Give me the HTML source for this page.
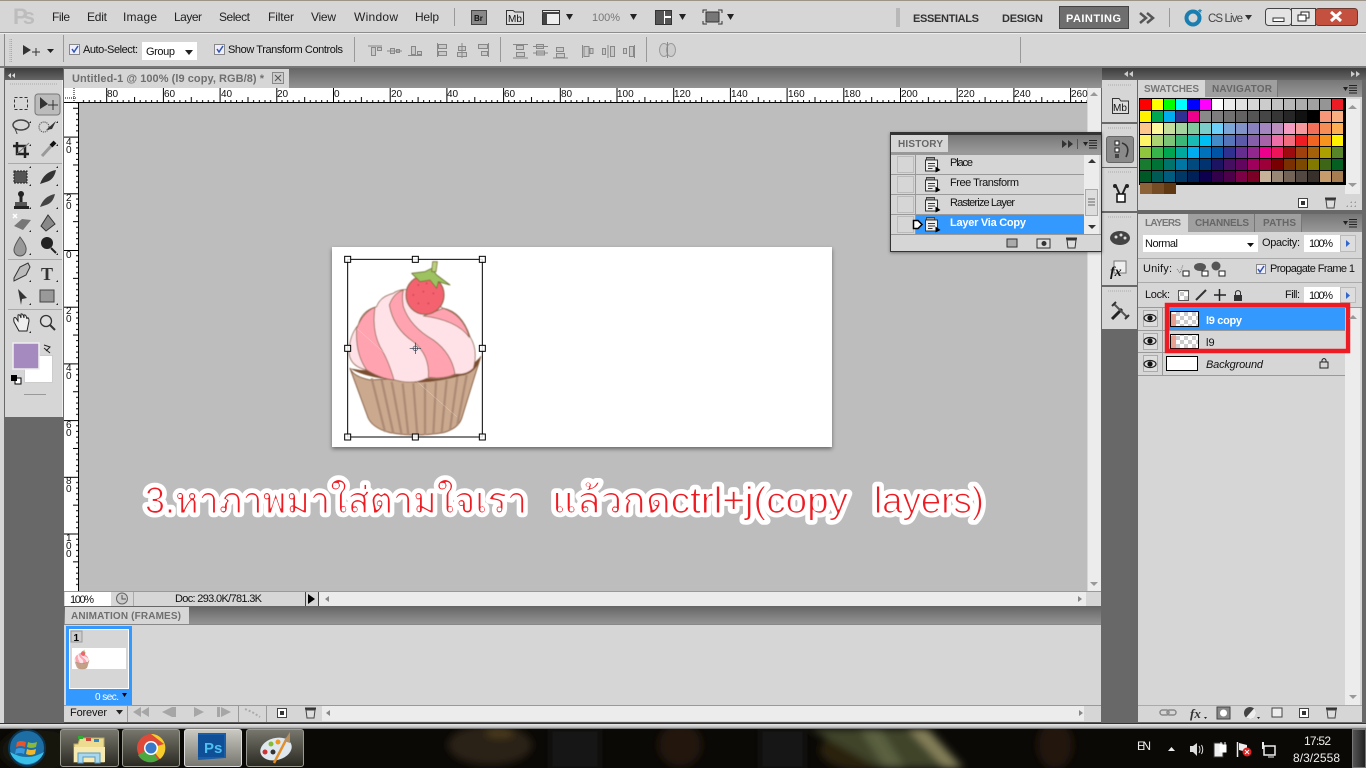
<!DOCTYPE html>
<html><head><meta charset="utf-8"><title>Photoshop</title>
<style>
html,body{margin:0;padding:0;width:1366px;height:768px;overflow:hidden;background:#686868}
.b{position:absolute;box-sizing:border-box}
svg{position:absolute;left:0;top:0}
text{font-family:"Liberation Sans","Noto Sans CJK JP",sans-serif;font-size:11px;fill:#111}
.m{font-size:12px;fill:#222}
.t{font-size:11px;font-weight:bold;fill:#6f6f6f}
.sw{position:absolute;left:1139px;top:98px;width:205px;display:grid;grid-template-columns:repeat(17,11px);grid-auto-rows:11px;gap:1px;padding:1px;background:#000;height:85px}
.sw2{position:absolute;left:1140px;top:183px;display:grid;grid-template-columns:repeat(3,12px);grid-auto-rows:11px}
.sw i,.sw2 i{display:block}
.cap{font-size:37px;font-family:"Liberation Sans","Noto Sans CJK JP","WenQuanYi Zen Hei",sans-serif}
.halo{fill:#fff;stroke:#fff;stroke-width:8.5px;stroke-linejoin:round}
.ink{fill:#ed1c24}
</style></head><body>
<!-- frame -->
<div class="b" style="left:0;top:0;width:1366px;height:1px;background:#9c9486"></div>
<div class="b" style="left:0;top:1px;width:1366px;height:31px;background:#d6d6d6"></div>
<div class="b" style="left:0;top:32px;width:1366px;height:2px;background:linear-gradient(#8d8d8d 50%,#eee 50%)"></div>
<div class="b" style="left:4px;top:34px;width:1362px;height:32px;background:#d6d6d6;border-left:1px solid #888"></div>
<div class="b" style="left:0;top:34px;width:4px;height:691px;background:#d6d6d6"></div>
<div class="b" style="left:0;top:66px;width:1366px;height:2px;background:#777"></div>
<div class="b" style="left:0;top:68px;width:1366px;height:657px;background:#686868"></div>
<div class="b" style="left:0;top:68px;width:4px;height:657px;background:#d6d6d6"></div>
<!-- tool panel -->
<div class="b" style="left:5px;top:68px;width:58px;height:12px;background:linear-gradient(#3d3d3d,#666)"></div>
<div class="b" style="left:5px;top:80px;width:58px;height:337px;background:#d6d6d6;border-right:1px solid #eee"></div>
<!-- doc -->
<div class="b" style="left:64px;top:68px;width:1038px;height:20px;background:linear-gradient(#666,#939393)"></div>
<div class="b" style="left:64px;top:69px;width:225px;height:19px;background:#d6d6d6"></div>
<div class="b" style="left:64px;top:88px;width:1023px;height:15px;background:#fff;border-bottom:1px solid #000"></div>
<div class="b" style="left:64px;top:103px;width:15px;height:488px;background:#fff;border-right:1px solid #000"></div>
<div class="b" style="left:79px;top:103px;width:1008px;height:488px;background:#bdbdbd"></div>
<div class="b" style="left:1087px;top:88px;width:14px;height:503px;background:#ececec;border-left:1px solid #d6d6d6"></div>
<div class="b" style="left:332px;top:247px;width:500px;height:200px;background:#fff;box-shadow:0 2px 4px rgba(0,0,0,.45)"></div>
<!-- status -->
<div class="b" style="left:64px;top:591px;width:1037px;height:15px;background:#d6d6d6;border-top:1px solid #999"></div>
<div class="b" style="left:65px;top:592px;width:46px;height:14px;background:#fff"></div>
<div class="b" style="left:318px;top:592px;width:768px;height:14px;background:#ececec"></div>
<div class="b" style="left:1086px;top:592px;width:15px;height:14px;background:#d6d6d6"></div>
<!-- animation -->
<div class="b" style="left:64px;top:606px;width:1037px;height:18px;background:linear-gradient(#656565,#949494)"></div>
<div class="b" style="left:65px;top:607px;width:124px;height:17px;background:#d6d6d6"></div>
<div class="b" style="left:64px;top:624px;width:1037px;height:98px;background:#d6d6d6;border-top:1px solid #888"></div>
<div class="b" style="left:66px;top:626px;width:66px;height:79px;background:#3399ff"></div>
<div class="b" style="left:69px;top:629px;width:60px;height:60px;background:#d6d6d6;border:1px solid #fff;outline:0"></div>
<div class="b" style="left:72px;top:648px;width:54px;height:21px;background:#fff"></div>
<div class="b" style="left:64px;top:705px;width:1037px;height:1px;background:#999"></div>
<div class="b" style="left:322px;top:706px;width:762px;height:15px;background:#ececec"></div>
<div class="b" style="left:64px;top:722px;width:1037px;height:1px;background:#555"></div>
<!-- right dock -->
<div class="b" style="left:1102px;top:68px;width:264px;height:12px;background:linear-gradient(#3d3d3d,#666)"></div>
<div class="b" style="left:1102px;top:80px;width:35px;height:42px;background:#d6d6d6"></div>
<div class="b" style="left:1102px;top:124px;width:35px;height:43px;background:#d6d6d6"></div>
<div class="b" style="left:1102px;top:168px;width:35px;height:43px;background:#d6d6d6"></div>
<div class="b" style="left:1102px;top:213px;width:35px;height:72px;background:#d6d6d6"></div>
<div class="b" style="left:1102px;top:287px;width:35px;height:42px;background:#d6d6d6"></div>
<div class="b" style="left:1106px;top:136px;width:28px;height:27px;background:#8a8a8a;border:1px solid #666;border-radius:3px"></div>
<!-- swatches panel -->
<div class="b" style="left:1138px;top:80px;width:224px;height:130px;background:#d6d6d6"></div>
<div class="b" style="left:1205px;top:80px;width:157px;height:17px;background:linear-gradient(#777,#999)"></div>
<div class="b" style="left:1205px;top:80px;width:73px;height:17px;background:#9f9f9f;border-right:1px solid #777"></div>
<div class="b" style="left:1345px;top:99px;width:15px;height:95px;background:#ececec"></div>
<div class="sw">
<i style="background:#f00"></i><i style="background:#ff0"></i><i style="background:#0f0"></i><i style="background:#0ff"></i><i style="background:#00f"></i><i style="background:#f0f"></i><i style="background:#fff"></i><i style="background:#ebebeb"></i><i style="background:#e1e1e1"></i><i style="background:#d7d7d7"></i><i style="background:#ccc"></i><i style="background:#c2c2c2"></i><i style="background:#b7b7b7"></i><i style="background:#acacac"></i><i style="background:#a1a1a1"></i><i style="background:#959595"></i><i style="background:#ed1c24"></i>
<i style="background:#fff200"></i><i style="background:#00a651"></i><i style="background:#00aeef"></i><i style="background:#2e3192"></i><i style="background:#ec008c"></i><i style="background:#898989"></i><i style="background:#7d7d7d"></i><i style="background:#707070"></i><i style="background:#626262"></i><i style="background:#555"></i><i style="background:#464646"></i><i style="background:#363636"></i><i style="background:#262626"></i><i style="background:#111"></i><i style="background:#000"></i><i style="background:#f7977a"></i><i style="background:#fbad82"></i>
<i style="background:#fdc68c"></i><i style="background:#fff799"></i><i style="background:#c6df9c"></i><i style="background:#a4d49d"></i><i style="background:#81ca9d"></i><i style="background:#7bcdc9"></i><i style="background:#6ccff7"></i><i style="background:#7ca6d8"></i><i style="background:#8293ca"></i><i style="background:#8881be"></i><i style="background:#a286bd"></i><i style="background:#bc8dbf"></i><i style="background:#f49bc1"></i><i style="background:#f5999d"></i><i style="background:#f26f5a"></i><i style="background:#f68e55"></i><i style="background:#fdae53"></i>
<i style="background:#fff467"></i><i style="background:#acd372"></i><i style="background:#7cc576"></i><i style="background:#3bb878"></i><i style="background:#1abbb4"></i><i style="background:#00bff3"></i><i style="background:#438cca"></i><i style="background:#5574b9"></i><i style="background:#5c5aa8"></i><i style="background:#855fa8"></i><i style="background:#a763a8"></i><i style="background:#ee6fa8"></i><i style="background:#f16d7e"></i><i style="background:#ee1d24"></i><i style="background:#f16522"></i><i style="background:#f7941d"></i><i style="background:#fff100"></i>
<i style="background:#8fc63d"></i><i style="background:#37b44a"></i><i style="background:#00a650"></i><i style="background:#00a99e"></i><i style="background:#00aeef"></i><i style="background:#0072bc"></i><i style="background:#0054a5"></i><i style="background:#2f3090"></i><i style="background:#662d91"></i><i style="background:#92278f"></i><i style="background:#ec008c"></i><i style="background:#ed145a"></i><i style="background:#9e0b0f"></i><i style="background:#a0410d"></i><i style="background:#a36209"></i><i style="background:#aba000"></i><i style="background:#588528"></i>
<i style="background:#197b30"></i><i style="background:#007236"></i><i style="background:#00736a"></i><i style="background:#0076a4"></i><i style="background:#004a80"></i><i style="background:#003370"></i><i style="background:#1d1363"></i><i style="background:#450e61"></i><i style="background:#62055f"></i><i style="background:#9e005c"></i><i style="background:#9d0039"></i><i style="background:#790000"></i><i style="background:#7a3000"></i><i style="background:#7c4900"></i><i style="background:#827a00"></i><i style="background:#3e6617"></i><i style="background:#045f20"></i>
<i style="background:#005826"></i><i style="background:#005952"></i><i style="background:#005b7f"></i><i style="background:#003764"></i><i style="background:#002157"></i><i style="background:#0d004c"></i><i style="background:#32004b"></i><i style="background:#4b0049"></i><i style="background:#7b0046"></i><i style="background:#7a0026"></i><i style="background:#c7b299"></i><i style="background:#998675"></i><i style="background:#736357"></i><i style="background:#534741"></i><i style="background:#37302a"></i><i style="background:#c69c6d"></i><i style="background:#a77c50"></i>
</div>
<div class="sw2"><i style="background:#8c6239"></i><i style="background:#754c24"></i><i style="background:#603913"></i></div>
<!-- layers panel -->
<div class="b" style="left:1138px;top:214px;width:224px;height:508px;background:#d6d6d6"></div>
<div class="b" style="left:1188px;top:214px;width:174px;height:18px;background:linear-gradient(#777,#999)"></div>
<div class="b" style="left:1188px;top:214px;width:67px;height:18px;background:#9f9f9f;border-right:1px solid #777"></div>
<div class="b" style="left:1255px;top:214px;width:47px;height:18px;background:#9f9f9f;border-right:1px solid #777"></div>
<div class="b" style="left:1143px;top:235px;width:115px;height:17px;background:#fff"></div>
<div class="b" style="left:1304px;top:235px;width:36px;height:17px;background:#fff"></div>
<div class="b" style="left:1340px;top:235px;width:16px;height:17px;background:#ddd;border:1px solid #bbb"></div>
<div class="b" style="left:1138px;top:258px;width:224px;height:1px;background:#aaa"></div>
<div class="b" style="left:1138px;top:282px;width:224px;height:1px;background:#aaa"></div>
<div class="b" style="left:1304px;top:287px;width:36px;height:16px;background:#fff"></div>
<div class="b" style="left:1340px;top:287px;width:16px;height:16px;background:#ddd;border:1px solid #bbb"></div>
<div class="b" style="left:1138px;top:307px;width:224px;height:1px;background:#999"></div>
<div class="b" style="left:1165px;top:308px;width:180px;height:22px;background:#3399ff"></div>
<div class="b" style="left:1138px;top:330px;width:207px;height:1px;background:#999"></div>
<div class="b" style="left:1138px;top:352px;width:207px;height:1px;background:#999"></div>
<div class="b" style="left:1138px;top:375px;width:207px;height:1px;background:#999"></div>
<div class="b" style="left:1162px;top:308px;width:1px;height:68px;background:#999"></div>
<div class="b" style="left:1345px;top:308px;width:15px;height:397px;background:#ececec"></div>
<div class="b" style="left:1138px;top:705px;width:224px;height:1px;background:#aaa"></div>
<!-- history floating -->
<div class="b" style="left:890px;top:132px;width:212px;height:120px;background:#d6d6d6;border:1px solid #333;border-top:3px solid #333;box-shadow:0 1px 3px rgba(0,0,0,.4)"></div>
<div class="b" style="left:948px;top:135px;width:153px;height:17px;background:linear-gradient(#777,#999)"></div>
<div class="b" style="left:891px;top:152px;width:210px;height:3px;background:#999"></div>
<div class="b" style="left:1084px;top:155px;width:15px;height:80px;background:#ececec"></div>
<div class="b" style="left:916px;top:215px;width:168px;height:19px;background:#3399ff"></div>
<div class="b" style="left:1085px;top:189px;width:13px;height:27px;background:#ddd;border:1px solid #aaa"></div>
<!-- taskbar -->
<div class="b" style="left:0;top:723px;width:1366px;height:6px;background:linear-gradient(#333 0,#333 17%,#e8e8e8 17%,#bbb 75%,#555 100%)"></div>
<div class="b" style="left:0;top:729px;width:1366px;height:39px;background:#0b0906;overflow:hidden">
<svg width="1366" height="39" viewBox="0 729 1366 39"><defs><filter id="bl" x="-20%" y="-50%" width="140%" height="200%"><feGaussianBlur stdDeviation="4"/></filter></defs>
<g filter="url(#bl)"><ellipse cx="490" cy="745" rx="42" ry="20" fill="#2a2212"/><ellipse cx="500" cy="733" rx="14" ry="5" fill="#4a3a1e"/><rect x="550" y="729" width="50" height="40" fill="#191814"/><ellipse cx="680" cy="745" rx="22" ry="22" fill="#21190c"/><rect x="760" y="729" width="45" height="40" fill="#161612"/><ellipse cx="860" cy="750" rx="40" ry="20" fill="#2c2110"/><path d="M810 729L930 729L965 768L880 768Z" fill="#41442c"/><path d="M908 729L925 729L960 768L945 768Z" fill="#85805a"/><path d="M860 729L880 729L905 768L885 768Z" fill="#5a6040"/><ellipse cx="1055" cy="745" rx="18" ry="24" fill="#20140a"/><ellipse cx="40" cy="750" rx="40" ry="22" fill="#18160c"/></g></svg>
</div>
<div class="b" style="left:60px;top:729px;width:59px;height:38px;border:1px solid #9a9a90;border-radius:3px;background:linear-gradient(#77766c,#2b2a22)"></div>
<div class="b" style="left:122px;top:729px;width:58px;height:38px;border:1px solid #9a9a90;border-radius:3px;background:linear-gradient(#77766c,#2b2a22)"></div>
<div class="b" style="left:184px;top:729px;width:58px;height:38px;border:1px solid #ddd;border-radius:3px;background:linear-gradient(#c9c9c2,#77776f)"></div>
<div class="b" style="left:246px;top:729px;width:58px;height:38px;border:1px solid #9a9a90;border-radius:3px;background:linear-gradient(#77766c,#2b2a22)"></div>
<div class="b" style="left:1352px;top:729px;width:14px;height:39px;background:linear-gradient(90deg,#555,#222);border:1px solid #777"></div>

<svg width="1366" height="768" viewBox="0 0 1366 768">
<defs>
<filter id="er" x="-2%" y="-10%" width="104%" height="120%"><feMorphology operator="erode" radius="0.7"/></filter>
<filter id="sf"><feGaussianBlur stdDeviation="1.200"/></filter>
<pattern id="rh" x="333" y="88" width="56.7" height="15" patternUnits="userSpaceOnUse"><path d="M.5 0V15M5.7 12V15M11.3 12V15M17 12V15M22.7 12V15M28.4 9V15M34 12V15M39.7 12V15M45.4 12V15M51 12V15" stroke="#000" fill="none"/></pattern>
<pattern id="rv" x="64" y="250" width="15" height="56.7" patternUnits="userSpaceOnUse"><path d="M0 .5H15M12 5.7H15M12 11.3H15M12 17H15M12 22.7H15M9 28.4H15M12 34H15M12 39.7H15M12 45.4H15M12 51H15" stroke="#000" fill="none"/></pattern>
<pattern id="ck" width="8" height="8" patternUnits="userSpaceOnUse"><rect width="8" height="8" fill="#fff"/><rect width="4" height="4" fill="#ccc"/><rect x="4" y="4" width="4" height="4" fill="#ccc"/></pattern>
<g id="hi"><rect x="1" y="0" width="8" height="3" fill="#999" stroke="#444"/><rect x="0" y="2.500" width="12" height="11" fill="#eee" stroke="#333"/><path d="M2.500 6H9.500M2.500 8.500H9.500M2.500 11H7" stroke="#333"/><path d="M10 9L15 12.500L10 15Z" fill="#000"/></g>
<g id="eye"><ellipse cx="0" cy="0" rx="6" ry="3.500" fill="#ddd" stroke="#222" stroke-width="1.200"/><circle r="2.600" fill="#111"/></g>
<g id="cup" stroke-linejoin="round">
<path d="M60 385L115 535Q130 565 180 578Q255 592 340 578Q385 565 395 535L452 350Q440 395 400 405L120 420Q70 410 60 385Z" fill="#cba98f" stroke="#8a6244" stroke-width="3"/>
<path d="M125 415L165 575M155 420L190 580M185 425L215 585M218 430L235 585M250 430L262 587M285 430L285 585M318 425L310 582M350 420L335 578M382 410L360 570M410 405L382 555" stroke="#ac8a74" stroke-width="7" fill="none"/>
<path d="M60 385Q100 410 190 420Q280 440 400 405Q440 395 452 350L400 400L90 390Z" fill="#7a4d2d"/>
<path d="M58 345Q55 290 85 255Q95 212 140 200Q150 170 190 160Q210 145 240 150L340 205Q395 215 420 290Q445 330 430 385Q410 405 380 402Q350 420 290 415Q250 435 195 420Q160 420 110 390Q65 380 58 345Z" fill="#ffe2e7" stroke="#8f6448" stroke-width="2.500"/>
<path d="M80 265Q75 340 110 390Q150 415 192 420Q175 360 150 320Q125 270 135 202Q100 215 80 265Z" fill="#ffa3b1" stroke="#8f6448" stroke-width="2.500"/>
<path d="M178 195Q190 265 250 305Q300 345 295 412Q345 418 375 402Q365 340 310 300Q240 260 220 200Q215 170 220 150Q190 160 178 195Z" fill="#ffa3b1" stroke="#8f6448" stroke-width="2.500"/>
<path d="M280 228Q380 240 418 292Q400 225 340 205Z" fill="#ffa3b1" stroke="#8f6448" stroke-width="2.500"/>
<ellipse cx="285" cy="165" rx="57" ry="58" fill="#f4626f" stroke="#8f6448" stroke-width="3.500"/>
<path d="M245 100L285 95L305 85L320 105L360 135L325 125L320 145L300 120L270 125Z" fill="#9cc35f" stroke="#6a6a2a" stroke-width="2.500"/>
<path d="M308 65L322 65L318 95L305 95Z" fill="#b9d27a" stroke="#7a6a3a" stroke-width="2.500"/>
<g fill="#d04a58"><circle cx="265" cy="135" r="3"/><circle cx="290" cy="130" r="3"/><circle cx="250" cy="165" r="3"/><circle cx="280" cy="155" r="3"/><circle cx="310" cy="160" r="3"/><circle cx="265" cy="190" r="3"/><circle cx="295" cy="190" r="3"/></g>
</g>
</defs>

<!-- menu -->
<text x="13" y="24" style="font-size:22px;font-weight:bold;fill:#bdbdbd" textLength="22">Ps</text>
<text class="m" x="52" y="21" textLength="18">File</text><text class="m" x="87" y="21" textLength="20">Edit</text><text class="m" x="123" y="21" textLength="34">Image</text><text class="m" x="174" y="21" textLength="28">Layer</text><text class="m" x="219" y="21" textLength="31">Select</text><text class="m" x="268" y="21" textLength="26">Filter</text><text class="m" x="311" y="21" textLength="25">View</text><text class="m" x="354" y="21" textLength="44">Window</text><text class="m" x="415" y="21" textLength="24">Help</text>
<path d="M454.500 8V26" stroke="#999"/>
<rect x="471.500" y="10.500" width="15" height="14" fill="#888" stroke="#444"/><text x="474" y="21" style="font-size:8px;font-weight:bold">Br</text>
<path d="M506.500 10.500H513L515 12H523.500V24.500H506.500Z" fill="#ddd" stroke="#333"/><text x="508" y="22" style="font-size:10px">Mb</text>
<rect x="542.500" y="10.500" width="17" height="14" fill="#eee" stroke="#333"/><path d="M542 12H560V14H542ZM543 14H547V24H543Z" fill="#444"/>
<path d="M566 14H573L569.500 20Z" fill="#222"/>
<text x="592" y="21" textLength="28" style="font-size:11px;fill:#777">100%</text>
<path d="M630 14H637L633.500 20Z" fill="#222"/>
<rect x="655.500" y="10.500" width="16" height="14" fill="#fff" stroke="#333"/><path d="M656 11H664V24H656ZM665 11H671V16H665ZM665 18H671V24H665Z" fill="#555"/>
<path d="M679 14H686L682.500 20Z" fill="#222"/>
<rect x="706" y="12" width="13" height="10" fill="#777" stroke="#333"/><path d="M703 13V10H707M718 10H722V13M722 21V24H718M707 24H703V21" fill="none" stroke="#333"/>
<path d="M727 14H734L730.500 20Z" fill="#222"/>
<path d="M897 8V27M899 8V27" stroke="#999"/>
<text x="913" y="22" textLength="66" style="font-size:11px;font-weight:bold;fill:#333">ESSENTIALS</text>
<text x="1002" y="22" textLength="41" style="font-size:11px;font-weight:bold;fill:#333">DESIGN</text>
<rect x="1059.500" y="6.500" width="69" height="22" fill="#6e6e6e" stroke="#444"/>
<text x="1066" y="22" textLength="55" style="font-size:11px;font-weight:bold;fill:#fff">PAINTING</text>
<path d="M1140 13L1146 18L1140 23M1147 13L1153 18L1147 23" fill="none" stroke="#555" stroke-width="2.500"/>
<path d="M1169.500 8V27" stroke="#999"/>
<circle cx="1193" cy="18" r="6.500" fill="none" stroke="#1a7fb0" stroke-width="4"/><text x="1198" y="16" style="font-size:10px;font-weight:bold;fill:#1a7fb0">*</text>
<text x="1208" y="22" textLength="35" style="font-size:11.500px;fill:#444">CS Live</text><path d="M1245 15H1252L1248.500 20Z" fill="#333"/>
<rect x="1265.500" y="8.500" width="26" height="17" rx="3" fill="#e4e4e4" stroke="#444"/><rect x="1273" y="18" width="11" height="3.500" fill="#fff" stroke="#333"/>
<rect x="1291.500" y="8.500" width="24" height="17" fill="#e4e4e4" stroke="#444"/><rect x="1301" y="12" width="8" height="6" fill="#fff" stroke="#222"/><rect x="1298" y="15" width="8" height="6" fill="#fff" stroke="#222"/>
<rect x="1315.500" y="8.500" width="42" height="17" rx="3" fill="#c4503f" stroke="#6a3a30"/><path d="M1331 12L1341 21M1341 12L1331 21" stroke="#fff" stroke-width="3"/>

<!-- options -->
<path d="M10 39V62M11.500 39V62" stroke="#aaa" stroke-dasharray="1 1"/>
<path d="M23 45L31 50L23 55Z" fill="#333"/><path d="M36 48V56M32 52H40" stroke="#333"/>
<path d="M47 49H54L50.500 53Z" fill="#222"/>
<g stroke="#999"><path d="M63.500 35V62M354.500 37V62M500.500 37V62M646.500 37V62M1020.500 37V63"/></g>
<rect x="69.500" y="44.500" width="10" height="10" fill="#eef" stroke="#888"/><path d="M72 49L74 52L78 46" stroke="#35a" stroke-width="1.500" fill="none"/>
<text x="83" y="53" textLength="55">Auto-Select:</text>
<rect x="142" y="42" width="55" height="18" fill="#fff"/><text x="146" y="55" textLength="29">Group</text><path d="M185 50H193L189 55Z" fill="#222"/>
<rect x="214.500" y="44.500" width="10" height="10" fill="#eef" stroke="#888"/><path d="M217 49L219 52L223 46" stroke="#35a" stroke-width="1.500" fill="none"/>
<text x="228" y="53" textLength="115">Show Transform Controls</text>
<g fill="#c8c8c8" stroke="#888">
<path d="M368 46H382M371.500 47.500h4v8h-4zM377.500 47.500h4v3h-4z"/><path d="M387 51H402M390.500 48.500h4v5h-4zM396.500 49.500h3v3h-3z"/><path d="M408 55.500H422M411.500 46.500h4v8h-4zM417.500 51.500h4v3h-4z"/>
<path d="M437.500 43V57M438.500 44.500h8v4h-8zM438.500 51.500h8v4h-8z"/><path d="M462 43V58M458.500 46.500h7v4h-7zM457.500 52.500h9v4h-9z"/><path d="M488.500 43V57M478.500 44.500h9v4h-9zM481.500 51.500h6v4h-6z"/>
<path d="M513 44.500H528M516.500 45.500h7v4h-7zM516.500 52.500h8v4h-8zM513 58H528"/><path d="M533 46.500H548M533 53H548M536.500 44.500h7v4h-7zM536.500 51h8v4h-8z"/><path d="M553 58H568M556.500 47.500h7v4h-7zM556.500 53.500h8v4h-8z"/>
<path d="M582.500 45V58M584 46.500h5v10h-5zM590 48.500h3v5h-3z"/><path d="M608 45V58M602.500 48.500h3v6h-3zM610.500 46.500h4v10h-4z"/><path d="M634.500 45V58M623.500 48.500h3v5h-3zM629.500 46.500h4v10h-4z"/>
</g>
<ellipse cx="664" cy="50" rx="4.500" ry="6.500" fill="#ccc" stroke="#999"/><ellipse cx="671" cy="50" rx="4.500" ry="6.500" fill="#ccc" stroke="#999"/><path d="M667.500 42V58" stroke="#888"/>

<!-- collapse arrows -->
<path d="M11 73L8 75.500L11 78ZM15 73L12 75.500L15 78Z" fill="#ddd"/>
<path d="M1128 71L1124 74L1128 77ZM1133 71L1129 74L1133 77Z" fill="#ccc"/>
<path d="M1351 71L1355 74L1351 77ZM1356 71L1360 74L1356 77Z" fill="#ccc"/>
<!-- title -->
<text class="t" x="72" y="82" textLength="192">Untitled-1 @ 100% (l9 copy, RGB/8) *</text>
<rect x="272.500" y="72.500" width="11" height="11" fill="#ccc" stroke="#888"/><path d="M275 75L281 81M281 75L275 81" stroke="#555"/>
<!-- rulers -->
<rect x="79" y="88" width="1008" height="15" fill="url(#rh)"/>
<rect x="64" y="103" width="15" height="487" fill="url(#rv)"/>
<g><text x="107" y="97" style="font-size:10px">80</text><text x="164" y="97" style="font-size:10px">60</text><text x="221" y="97" style="font-size:10px">40</text><text x="277" y="97" style="font-size:10px">20</text><text x="334" y="97" style="font-size:10px">0</text><text x="391" y="97" style="font-size:10px">20</text><text x="447" y="97" style="font-size:10px">40</text><text x="504" y="97" style="font-size:10px">60</text><text x="561" y="97" style="font-size:10px">80</text><text x="617" y="97" style="font-size:10px">100</text><text x="674" y="97" style="font-size:10px">120</text><text x="731" y="97" style="font-size:10px">140</text><text x="788" y="97" style="font-size:10px">160</text><text x="844" y="97" style="font-size:10px">180</text><text x="901" y="97" style="font-size:10px">200</text><text x="958" y="97" style="font-size:10px">220</text><text x="1014" y="97" style="font-size:10px">240</text><text x="1071" y="97" style="font-size:10px">260</text></g>
<g><text x="66" y="145" style="font-size:10px">4</text><text x="66" y="153" style="font-size:10px">0</text><text x="66" y="201" style="font-size:10px">2</text><text x="66" y="209" style="font-size:10px">0</text><text x="66" y="258" style="font-size:10px">0</text><text x="66" y="314" style="font-size:10px">2</text><text x="66" y="322" style="font-size:10px">0</text><text x="66" y="371" style="font-size:10px">4</text><text x="66" y="379" style="font-size:10px">0</text><text x="66" y="428" style="font-size:10px">6</text><text x="66" y="436" style="font-size:10px">0</text><text x="66" y="484" style="font-size:10px">8</text><text x="66" y="492" style="font-size:10px">0</text><text x="66" y="541" style="font-size:10px">1</text><text x="66" y="549" style="font-size:10px">0</text><text x="66" y="557" style="font-size:10px">0</text></g>
<path d="M1090 96L1094 92L1098 96ZM1090 582L1094 586L1098 582Z" fill="#999"/>
<path d="M65 98H77M74 88V103" stroke="#000" stroke-dasharray="1 1"/>

<!-- toolbar -->
<path d="M10 84H58" stroke="#aaa" stroke-dasharray="1 1"/>
<rect x="35" y="94" width="25" height="21" rx="3" fill="#bbb" stroke="#777"/>
<rect x="14.500" y="97.500" width="13" height="12" fill="none" stroke="#333" stroke-dasharray="3 2"/>
<path d="M40 97L48 104L40 109Z" fill="#333"/><path d="M53 100V110M48 105H58" stroke="#333"/>
<ellipse cx="21" cy="125" rx="8" ry="5" fill="none" stroke="#444" stroke-width="1.500"/><path d="M15 129Q17 133 17 134" stroke="#444" fill="none"/>
<circle cx="44" cy="127" r="5" fill="none" stroke="#333" stroke-dasharray="1 1"/><path d="M46 130L56 121L52 129Z" fill="#333"/>
<path d="M17 142V154H29M13 146H25V158" fill="none" stroke="#222" stroke-width="2.500"/><path d="M17 154L29 143" stroke="#777"/>
<path d="M42 156L52 145" stroke="#999" stroke-width="3"/><path d="M51 146L55 142" stroke="#111" stroke-width="4"/>
<rect x="14" y="171" width="13" height="12" fill="#555" stroke="#222" stroke-dasharray="2 1"/>
<path d="M40 184Q44 172 56 170Q54 180 46 182Z" fill="#333"/>
<rect x="14" y="206" width="15" height="3" fill="#222"/><path d="M21 193V206" stroke="#222" stroke-width="3"/><circle cx="21" cy="194" r="3" fill="#222"/><rect x="15" y="202" width="12" height="4" fill="#555"/>
<path d="M40 207Q44 196 55 194Q53 203 46 205Z" fill="#444"/>
<path d="M14 226L22 219L31 220L23 230Z" fill="#777"/><path d="M13 214L17 218M17 214L13 218" stroke="#fff" stroke-width="1.500"/>
<path d="M41 226L48 215L55 224L46 231Z" fill="#888" stroke="#333"/>
<path d="M20 237Q27 246 26 250A6 6 0 0 1 14 250Q14 246 20 237Z" fill="#999" stroke="#555"/>
<circle cx="47" cy="243" r="6" fill="#222"/><path d="M51 248L56 253" stroke="#222" stroke-width="2"/>
<path d="M14 278L20 267L28 263L30 267L26 275L14 281Z" fill="#bbb" stroke="#333"/>
<text x="41" y="280" style="font-family:'Liberation Serif',serif;font-size:18px;font-weight:bold;fill:#333">T</text>
<path d="M18 289L27 298L22 299L21 305Z" fill="#333"/>
<rect x="40" y="290" width="14" height="12" fill="#999" stroke="#444"/>
<path d="M14 322Q13 316 16 318L18 321V315Q20 314 21 318V314Q23 313 24 318V315Q26 314 27 319V318Q29 317 29 321L27 331H19Z" fill="#eee" stroke="#222"/>
<circle cx="46" cy="321" r="5.500" fill="#ddd" stroke="#333" stroke-width="1.300"/><path d="M50 325L55 330" stroke="#333" stroke-width="2"/>
<path d="M8 163.500H62M8 259.500H62M8 309.500H62" stroke="#aaa"/>
<rect x="24.500" y="355.500" width="28" height="27" fill="#fff" stroke="#ccc"/>
<rect x="13" y="343" width="26" height="26" fill="#a58abf" stroke="#eee" stroke-width="1.500"/>
<path d="M44 345L50 347L46 351M50 353L44 348" fill="none" stroke="#222"/>
<rect x="15" y="378" width="6" height="6" fill="#fff" stroke="#000"/><rect x="11" y="375" width="6" height="6" fill="#000"/>
<path d="M24 394.500H46" stroke="#999"/>
<g fill="#222"><path d="M29 123l2 0 0-2zM56 123l2 0 0-2zM29 146l2 0 0-2zM56 146l2 0 0-2zM29 168l2 0 0-2zM56 168l2 0 0-2zM29 186l2 0 0-2zM56 186l2 0 0-2zM29 209l2 0 0-2zM56 209l2 0 0-2zM29 232l2 0 0-2zM56 232l2 0 0-2zM29 255l2 0 0-2zM56 255l2 0 0-2zM29 282l2 0 0-2zM56 282l2 0 0-2zM29 305l2 0 0-2zM56 305l2 0 0-2zM29 333l2 0 0-2z"/></g>

<!-- cupcake -->
<svg x="330" y="240" width="180" height="210" viewBox="0 0 540 630"><g filter="url(#sf)"><use href="#cup"/></g>
<path d="M80 265L380 530" stroke="#f5e8e0" stroke-width="1.500" opacity=".6"/>
<rect x="53" y="58" width="404" height="533" fill="none" stroke="#000" stroke-width="3"/>
<g fill="#fff" fill-opacity=".85" stroke="#000" stroke-width="3"><rect x="44" y="49" width="18" height="18"/><rect x="247" y="49" width="18" height="18"/><rect x="448" y="49" width="18" height="18"/><rect x="44" y="316" width="18" height="18"/><rect x="448" y="316" width="18" height="18"/><rect x="44" y="582" width="18" height="18"/><rect x="247" y="582" width="18" height="18"/><rect x="448" y="582" width="18" height="18"/></g>
<circle cx="256" cy="325" r="7" fill="none" stroke="#345" stroke-width="2"/><path d="M256 308V342M239 325H273" stroke="#234" stroke-width="2"/>
</svg>

<!-- big caption -->
<text class="cap halo" x="145" y="513" textLength="382" lengthAdjust="spacingAndGlyphs">3.หาภาพมาใส่ตามใจเรา</text>
<text class="cap halo" x="552" y="513" textLength="296" lengthAdjust="spacingAndGlyphs">แล้วกดctrl+j(copy</text>
<text class="cap halo" x="874" y="513" textLength="110" lengthAdjust="spacingAndGlyphs">layers)</text>
<g filter="url(#er)">
<text class="cap ink" x="145" y="513" textLength="382" lengthAdjust="spacingAndGlyphs">3.หาภาพมาใส่ตามใจเรา</text>
<text class="cap ink" x="552" y="513" textLength="296" lengthAdjust="spacingAndGlyphs">แล้วกดctrl+j(copy</text>
<text class="cap ink" x="874" y="513" textLength="110" lengthAdjust="spacingAndGlyphs">layers)</text>
</g>

<!-- status text -->
<text x="70" y="603" textLength="24">100%</text>
<circle cx="122" cy="598.500" r="5.500" fill="#ccc" stroke="#666"/><path d="M122 595V599H126" fill="none" stroke="#555"/>
<path d="M133.500 592V606" stroke="#aaa"/>
<text x="175" y="602" textLength="87">Doc: 293.0K/781.3K</text>
<path d="M308 594L315 599L308 604Z" fill="#000"/><path d="M305.500 592V606M318.500 592V606" stroke="#444"/>
<path d="M329 596L325 599L329 602Z" fill="#888"/>
<path d="M1078 596L1082 599L1078 602Z" fill="#888"/>
<text x="71" y="619" textLength="110" style="font-size:10px;font-weight:bold;fill:#6f6f6f">ANIMATION (FRAMES)</text>
<rect x="71" y="631" width="11" height="11" fill="#ccc" stroke="#999"/><text x="73.500" y="641" style="font-size:10px;font-weight:bold;fill:#000">1</text>
<svg x="73" y="649" width="18" height="21" viewBox="40 40 430 570"><use href="#cup"/></svg>
<text x="95" y="700" textLength="24" style="font-size:10px;fill:#fff">0 sec.</text><path d="M122 693H127L124.500 697Z" fill="#000"/>
<text x="70" y="716" textLength="37">Forever</text><path d="M116 710H123L119.500 714.500Z" fill="#222"/>
<path d="M127.500 706V722" stroke="#999"/>
<g fill="#a6a6a6"><path d="M133 712L141 707V717ZM141 712L149 707V717Z"/><path d="M162 712L172 707V717ZM172 707h4v10h-4z"/><path d="M194 707L204 712L194 717Z"/><path d="M217 707h3v10h-3zM221 707L231 712L221 717Z"/></g>
<path d="M238.500 706V722M266.500 706V722" stroke="#999"/>
<path d="M245 709L252 712L260 717" stroke="#aaa" stroke-width="2" stroke-dasharray="2 2" fill="none"/>
<rect x="277.500" y="708.500" width="9" height="9" fill="#fff" stroke="#444"/><rect x="280" y="711" width="4" height="4" fill="#333"/>
<path d="M306 710H315L314 718H307Z" fill="#ddd" stroke="#444"/><path d="M305 708.500H316" stroke="#333" stroke-width="2"/>
<path d="M330 710L326 713L330 716Z" fill="#888"/>
<path d="M1079 710L1083 713L1079 716Z" fill="#888"/>

<!-- dock icons -->
<path d="M1108 85H1132M1108 128H1132M1108 172H1132M1108 217H1132M1108 291H1132" stroke="#aaa" stroke-dasharray="1 1"/>
<path d="M1112.500 98.500H1119L1121 101H1128.500V113.500H1112.500Z" fill="#ddd" stroke="#333"/><text x="1113" y="111" style="font-size:10px">Mb</text>
<rect x="1115" y="141" width="4" height="4" fill="#fff" stroke="#222"/><rect x="1115" y="148" width="4" height="4" fill="#fff" stroke="#222"/><rect x="1115" y="154" width="4" height="4" fill="#444"/>
<path d="M1122 143Q1131 146 1126 157" fill="none" stroke="#333" stroke-width="1.600"/>
<path d="M1116 186L1120 195M1126 186L1122 195" stroke="#222" stroke-width="2"/><circle cx="1115" cy="186" r="2" fill="#222"/><circle cx="1127" cy="186" r="2" fill="#222"/><rect x="1117" y="194" width="8" height="8" fill="#fff" stroke="#111" stroke-width="1.500"/>
<ellipse cx="1120" cy="238" rx="10" ry="7" fill="#444"/><circle cx="1116" cy="237" r="1.500" fill="#ddd"/><circle cx="1121" cy="235" r="1.500" fill="#ddd"/><circle cx="1125" cy="238" r="1.500" fill="#ddd"/>
<rect x="1114" y="261" width="12" height="12" fill="#eee" stroke="#777"/><text x="1110" y="276" style="font-family:'Liberation Serif',serif;font-style:italic;font-size:14px;font-weight:bold">fx</text>
<path d="M1112 319L1122 309" stroke="#222" stroke-width="3"/><path d="M1114 304L1127 317" stroke="#555" stroke-width="2"/><path d="M1112 306L1116 302M1125 319L1129 315" stroke="#333" stroke-width="2"/>

<!-- swatch tabs -->
<text x="1144" y="92" textLength="55" style="font-size:10px;font-weight:bold;fill:#777">SWATCHES</text>
<text x="1212" y="92" textLength="60" style="font-size:10px;font-weight:bold;fill:#666">NAVIGATOR</text>
<path d="M1343 87H1348L1345.500 91Z M1349 85H1357V86H1349ZM1349 87.500H1357V88.500H1349ZM1349 90H1357V91H1349ZM1349 92.500H1357V93.500H1349Z" fill="#222"/>
<path d="M1348 109L1352.500 105L1357 109ZM1348 183L1352.500 187L1357 183Z" fill="#999"/>
<rect x="1298.500" y="198.500" width="9" height="9" fill="#fff" stroke="#444"/><rect x="1301" y="201" width="4" height="4" fill="#333"/>
<path d="M1326 200H1335L1334 208H1327Z" fill="#ddd" stroke="#444"/><path d="M1325 198.500H1336" stroke="#333" stroke-width="2"/>
<path d="M1346 207l2 0 0-2zM1350 207l2 0 0-2zM1354 207l2 0 0-2zM1350 203l2 0 0-2zM1354 203l2 0 0-2z" fill="#999"/>

<!-- layers -->
<text x="1145" y="226" textLength="36" style="font-size:10px;font-weight:bold;fill:#777">LAYERS</text>
<text x="1195" y="226" textLength="54" style="font-size:10px;font-weight:bold;fill:#666">CHANNELS</text>
<text x="1263" y="226" textLength="33" style="font-size:10px;font-weight:bold;fill:#666">PATHS</text>
<path d="M1343 221H1348L1345.500 225Z M1349 219H1357V220H1349ZM1349 221.500H1357V222.500H1349ZM1349 224H1357V225H1349ZM1349 226.500H1357V227.500H1349Z" fill="#222"/>
<text x="1145" y="247" textLength="33">Normal</text><path d="M1247 243H1254L1250.500 247Z" fill="#111"/>
<text x="1262" y="246" textLength="38">Opacity:</text><text x="1309" y="247" textLength="24">100%</text><path d="M1346 240L1350 243.500L1346 247Z" fill="#36c"/>
<text x="1143" y="272" textLength="29">Unify:</text>
<path d="M1177 269L1180 273L1183 265" fill="none" stroke="#777" stroke-dasharray="1 1"/><rect x="1183" y="271" width="6" height="5" fill="#fff" stroke="#222"/>
<ellipse cx="1200" cy="267" rx="6" ry="4" fill="#555"/><rect x="1202" y="271" width="6" height="5" fill="#fff" stroke="#222"/>
<circle cx="1216" cy="266" r="4.500" fill="#555"/><rect x="1219" y="271" width="6" height="5" fill="#fff" stroke="#222"/>
<rect x="1256.500" y="264.500" width="9" height="9" fill="#eef" stroke="#888"/><path d="M1258 269L1260 272L1264 266" stroke="#35a" stroke-width="1.500" fill="none"/>
<text x="1270" y="272" textLength="85">Propagate Frame 1</text>
<text x="1145" y="298" textLength="25">Lock:</text>
<rect x="1178.500" y="290.500" width="10" height="10" fill="url(#ck)" stroke="#555"/>
<path d="M1196 300L1206 290" stroke="#333" stroke-width="2"/>
<path d="M1219.500 289V301M1214 295H1226" stroke="#222" stroke-width="1.500"/>
<rect x="1234" y="295" width="8" height="6" fill="#333"/><path d="M1235.500 295V292Q1238 289 1240.500 292V295" fill="none" stroke="#333"/>
<text x="1285" y="298" textLength="15">Fill:</text><text x="1309" y="299" textLength="24">100%</text><path d="M1346 292L1350 295.500L1346 299Z" fill="#36c"/>
<g stroke="#aaa" fill="#ddd"><rect x="1143.500" y="310.500" width="14" height="16"/><rect x="1143.500" y="333.500" width="14" height="16"/><rect x="1143.500" y="355.500" width="14" height="16"/></g>
<use href="#eye" x="1150" y="318"/><use href="#eye" x="1150" y="341"/><use href="#eye" x="1150" y="364"/>
<rect x="1170.500" y="311.500" width="28" height="15" fill="url(#ck)" stroke="#000"/>
<rect x="1170.500" y="334.500" width="28" height="14" fill="url(#ck)" stroke="#000"/>
<rect x="1166.500" y="356.500" width="31" height="14" fill="#fff" stroke="#000"/>
<path d="M1171 314H1176V326H1171ZM1171 336H1176V348H1171Z" fill="#e8a090"/>
<text x="1206" y="324" textLength="36" style="font-size:11px;font-weight:bold;fill:#fff">l9 copy</text>
<text x="1206" y="346" style="font-size:11px">l9</text>
<text x="1206" y="368" textLength="57" style="font-size:11px;font-style:italic">Background</text>
<rect x="1320" y="362" width="8" height="6" fill="none" stroke="#222"/><path d="M1322 362V360Q1324 357 1326 360V362" fill="none" stroke="#222"/>
<rect x="1167" y="305" width="181" height="46" fill="none" stroke="#ed1c24" stroke-width="4.500"/>
<path d="M1349 319L1353 315L1357 319ZM1349 695L1353 699L1357 695Z" fill="#999"/>
<!-- layers bottom -->
<rect x="1160" y="710" width="9" height="5" rx="2.500" fill="none" stroke="#888" stroke-width="1.500"/><rect x="1167" y="710" width="9" height="5" rx="2.500" fill="none" stroke="#888" stroke-width="1.500"/>
<text x="1190" y="718" style="font-family:'Liberation Serif',serif;font-style:italic;font-weight:bold;font-size:13px;fill:#333">fx</text>
<path d="M1204 717H1207L1205.500 719Z" fill="#222"/>
<rect x="1217" y="707" width="13" height="12" fill="#888" stroke="#444"/><circle cx="1223.500" cy="713" r="3.500" fill="#fff"/>
<circle cx="1250" cy="713" r="6" fill="#444"/><path d="M1254 708.500A6 6 0 0 1 1246 717.500Z" fill="#eee"/><path d="M1257 717H1260L1258.500 719Z" fill="#222"/>
<path d="M1272 708H1282V717H1272Z" fill="#eee" stroke="#444"/>
<rect x="1299.500" y="708.500" width="9" height="9" fill="#fff" stroke="#444"/><rect x="1302" y="711" width="4" height="4" fill="#333"/>
<path d="M1327 710H1336L1335 718H1328Z" fill="#ddd" stroke="#444"/><path d="M1326 708.500H1337" stroke="#333" stroke-width="2"/>

<!-- history -->
<text x="898" y="147" textLength="45" style="font-size:10px;font-weight:bold;fill:#666">HISTORY</text>
<path d="M1062 140L1067 144L1062 148ZM1068 140L1073 144L1068 148Z" fill="#333"/><path d="M1077.500 139V149" stroke="#555"/>
<path d="M1083 142H1088L1085.500 146Z M1089 140H1097V141H1089ZM1089 142.500H1097V143.500H1089ZM1089 145H1097V146H1089ZM1089 147.500H1097V148.500H1089Z" fill="#222"/>
<path d="M891 174.500H1084M891 194.500H1084M891 214.500H1084M891 234.500H1101M915.500 155V234" stroke="#999"/>
<g fill="none" stroke="#bbb"><rect x="897.500" y="156.500" width="16" height="16"/><rect x="897.500" y="176.500" width="16" height="16"/><rect x="897.500" y="196.500" width="16" height="16"/><rect x="897.500" y="216.500" width="16" height="16"/></g>
<use href="#hi" x="925.500" y="157.500"/><use href="#hi" x="925.500" y="177.500"/><use href="#hi" x="925.500" y="197.500"/><use href="#hi" x="925.500" y="217.500"/>
<path d="M913.500 220.500H918L922 224.500L918 228.500H913.500Z" fill="#fff" stroke="#000" stroke-width="1.500"/>
<text x="950" y="166" textLength="23">Place</text><text x="950" y="186" textLength="69">Free Transform</text><text x="950" y="206" textLength="65">Rasterize Layer</text>
<text x="950" y="226" textLength="76" style="font-size:11px;font-weight:bold;fill:#fff">Layer Via Copy</text>
<path d="M1088 163L1092 159L1096 163ZM1088 225L1092 229L1096 225Z" fill="#333"/>
<path d="M1088 199H1095M1088 202H1095M1088 205H1095" stroke="#666"/>
<rect x="1007" y="239" width="10" height="8" fill="#aaa" stroke="#333"/>
<rect x="1037" y="239" width="13" height="9" fill="#ddd" stroke="#333"/><circle cx="1044" cy="243.500" r="2.500" fill="#333"/>
<path d="M1067 240H1076L1075 248H1068Z" fill="#ddd" stroke="#333"/><path d="M1066 238.500H1077" stroke="#333" stroke-width="2"/>

<!-- taskbar icons -->
<circle cx="27" cy="748" r="18" fill="#1c6ea5" stroke="#0c3450" stroke-width="2"/><path d="M10 752Q27 762 44 752A18 18 0 0 1 10 752Z" fill="#38c0e8"/>
<path d="M17 742Q21 740 26 742L25 747Q21 745 16 747Z" fill="#e8542c"/><path d="M28 742Q32 744 37 742L36 747Q31 749 27 747Z" fill="#8ab83a"/><path d="M16 749Q20 747 25 749L24 754Q20 752 15 754Z" fill="#3a9ae0"/><path d="M27 749Q31 751 36 749L35 754Q30 756 26 754Z" fill="#f2b82c"/>
<path d="M74 744H78L80 738H104V762H74Z" fill="#ecdc92" stroke="#b8a862"/><path d="M74 747H105V762H74Z" fill="#f6eab0"/><rect x="78" y="736" width="5" height="3" fill="#3a3"/><rect x="86" y="738" width="5" height="3" fill="#c43"/><rect x="94" y="739" width="5" height="3" fill="#38c"/>
<path d="M78 763V753H100V763H95V757H83V763Z" fill="#a8d8ee" stroke="#5b9ac0"/>
<circle cx="151" cy="748" r="14" fill="#de4a3a"/><path d="M151 748L138 755A14 14 0 0 0 158 760Z" fill="#4aa83e"/><path d="M151 734A14 14 0 0 1 160 759L151 748L164 744Z" fill="#f6cc2c"/><circle cx="151" cy="748" r="7" fill="#fff"/><circle cx="151" cy="748" r="5.500" fill="#3a78c8"/>
<path d="M198 733L226 733V758L198 760Z" fill="#1a5ea8"/><path d="M198 735H224V757H198Z" fill="#0e4f98"/>
<text x="204" y="753" style="font-size:15px;font-weight:bold;fill:#4ec0f0">Ps</text>
<ellipse cx="276" cy="749" rx="16" ry="11" fill="#dfe8ee" transform="rotate(-15 276 749)"/><circle cx="265" cy="752" r="2.500" fill="#c33"/><circle cx="271" cy="744" r="2.500" fill="#8b3"/><circle cx="278" cy="742" r="2.500" fill="#e92"/><circle cx="273" cy="752" r="2.500" fill="#333"/>
<path d="M274 763L287 738" stroke="#e0902c" stroke-width="2.500"/><path d="M284 741L290 732L290 743Z" fill="#b89060"/>

<text x="1137" y="750" textLength="14" style="font-size:12px;fill:#eee">EN</text>
<path d="M1168 751L1171.500 747L1175 751Z" fill="#eee"/>
<path d="M1190 746H1193L1197 743V756L1193 752H1190Z" fill="#ddd"/><path d="M1199 746Q1201 749.500 1199 753M1201.500 745Q1204 749.500 1201.500 754" stroke="#ddd" fill="none"/>
<rect x="1214" y="743" width="9" height="14" fill="#eee" stroke="#333"/><path d="M1220 745H1226V752H1220ZM1221 745V742M1225 745V742" fill="#fff" stroke="#fff"/>
<path d="M1237.500 742V757" stroke="#eee" stroke-width="1.500"/><path d="M1239 743L1247 745V752L1239 750Z" fill="#eee"/><circle cx="1247" cy="752" r="4.500" fill="#d22"/><path d="M1245 750L1249 754M1249 750L1245 754" stroke="#fff"/>
<rect x="1264" y="746" width="11" height="9" fill="none" stroke="#eee" stroke-width="1.500"/><path d="M1263 742V749" stroke="#eee" stroke-width="2"/><path d="M1268 757H1274" stroke="#eee"/>
<text x="1304" y="745" textLength="27" style="font-size:12px;fill:#eee">17:52</text>
<text x="1293" y="762" textLength="47" style="font-size:12px;fill:#eee">8/3/2558</text>
</svg>
</body></html>
